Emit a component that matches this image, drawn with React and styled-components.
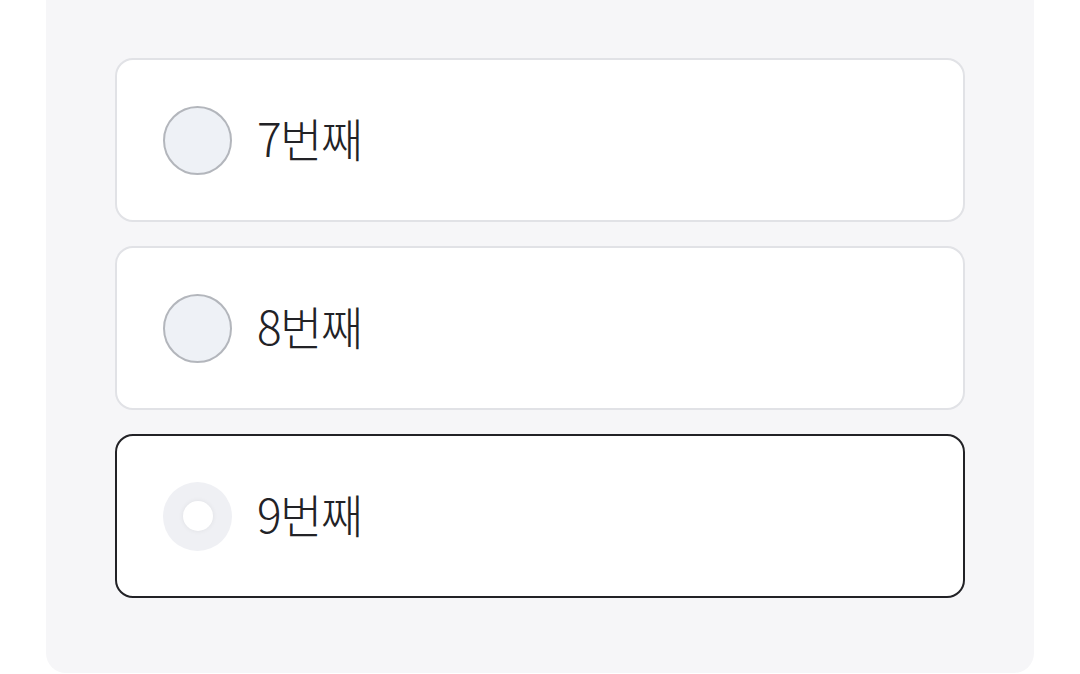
import React, { useState } from "react";
import styled, { createGlobalStyle } from "styled-components";

const GlobalStyle = createGlobalStyle`
  html, body {
    margin: 0;
    padding: 0;
    background: #ffffff;
    font-family: "Noto Sans CJK KR", "Noto Sans", sans-serif;
  }
`;

const Page = styled.div`
  width: 1080px;
  height: 674px;
  overflow: hidden;
`;

const Panel = styled.div`
  margin: 0 46px;
  height: 673px;
  box-sizing: border-box;
  background: #f6f6f8;
  border-radius: 0 0 20px 20px;
  padding: 58px 69px 0;
  display: flex;
  flex-direction: column;
  gap: 24px;
`;

const Option = styled.label`
  height: 164px;
  box-sizing: border-box;
  display: flex;
  align-items: center;
  gap: 25px;
  padding: 0 46px;
  background: #ffffff;
  border: 2px solid ${(p) => (p.$active ? "#222226" : "#e1e2e6")};
  border-radius: 18px;
  cursor: pointer;
`;

const Radio = styled.span`
  width: 69px;
  height: 69px;
  box-sizing: border-box;
  border-radius: 50%;
  flex-shrink: 0;
  display: flex;
  align-items: center;
  justify-content: center;
  border: ${(p) => (p.$active ? "none" : "2px solid #b3b6bc")};
  background: ${(p) => (p.$active ? "#eff0f4" : "#eef1f6")};
`;

const Dot = styled.span`
  width: 30px;
  height: 30px;
  border-radius: 50%;
  background: #ffffff;
  box-shadow: 0 0 5px rgba(0, 0, 0, 0.07);
`;

const Label = styled.span`
  font-size: 46px;
  font-weight: 300;
  color: #222226;
  letter-spacing: -1.5px;
  line-height: 1;
  padding-bottom: 6px;
`;

const items = ["7번째", "8번째", "9번째"];

export default function App() {
  const [selected, setSelected] = useState(2);
  return (
    <Page>
      <GlobalStyle />
      <Panel>
        {items.map((t, i) => (
          <Option key={t} $active={selected === i} onClick={() => setSelected(i)}>
            <Radio $active={selected === i}>{selected === i && <Dot />}</Radio>
            <Label>{t}</Label>
          </Option>
        ))}
      </Panel>
    </Page>
  );
}
